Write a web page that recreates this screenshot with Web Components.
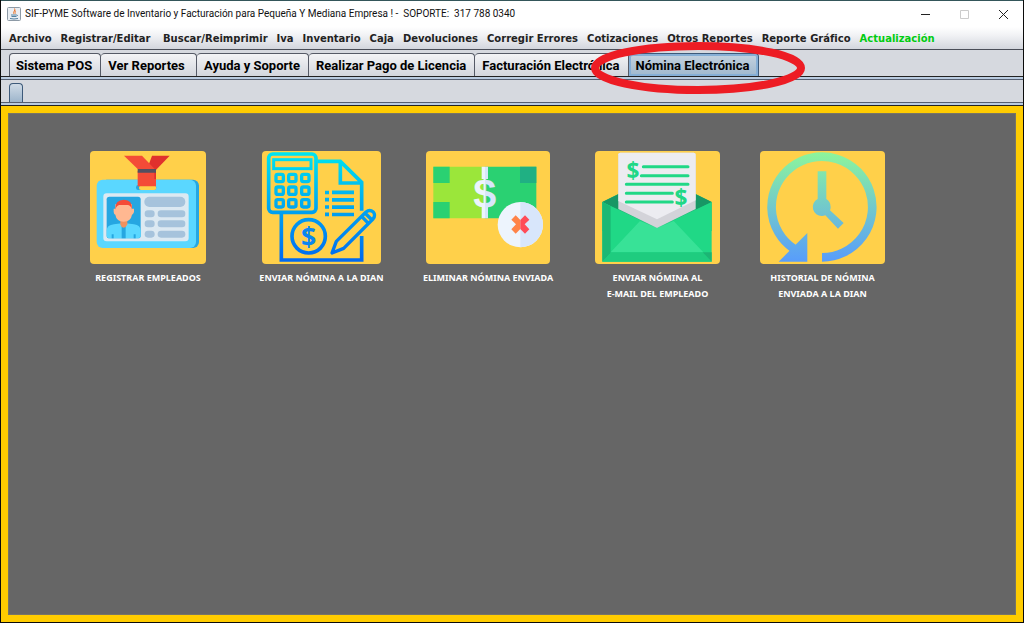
<!DOCTYPE html>
<html lang="es">
<head>
<meta charset="utf-8">
<meta name="viewport" content="width=device-width, initial-scale=1">
<title>SIF-PYME</title>
<style>
  html, body { height: 100%; margin: 0; }
  body { background: #000; }
</style>
</head>
<body>
<sif-window>
  <title-bar slot="title">SIF-PYME Software de Inventario y Facturación para Pequeña Y Mediana Empresa ! -&nbsp; SOPORTE:&nbsp; 317 788 0340</title-bar>
  <menu-bar slot="menu">
    <menu-item>Archivo</menu-item>
    <menu-item>Registrar/Editar&nbsp;</menu-item>
    <menu-item>Buscar/Reimprimir</menu-item>
    <menu-item>Iva</menu-item>
    <menu-item>Inventario</menu-item>
    <menu-item>Caja</menu-item>
    <menu-item>Devoluciones</menu-item>
    <menu-item>Corregir Errores</menu-item>
    <menu-item>Cotizaciones</menu-item>
    <menu-item>Otros Reportes</menu-item>
    <menu-item>Reporte Gráfico</menu-item>
    <menu-item accent>Actualización</menu-item>
  </menu-bar>
  <tab-strip slot="tabs">
    <tab-item>Sistema POS</tab-item>
    <tab-item>Ver Reportes&nbsp;</tab-item>
    <tab-item>Ayuda y Soporte</tab-item>
    <tab-item>Realizar Pago de Licencia</tab-item>
    <tab-item>Facturación Electrónica</tab-item>
    <tab-item selected marked>Nómina Electrónica</tab-item>
  </tab-strip>
  <tab-strip slot="tabs">
    <tab-item compact selected label="Opciones"></tab-item>
  </tab-strip>

  <action-card>
    <svg slot="icon" width="116" height="113" viewBox="28 20 348 339" aria-hidden="true">
      <rect x="60" y="106" width="295" height="205" rx="18" fill="#26a6e1"/>
      <rect x="48" y="106" width="298" height="205" rx="18" fill="#5ad7ff"/>
      <rect x="166" y="122" width="61" height="15" rx="7" fill="#26a6e1"/>
      <rect x="175" y="124" width="52" height="13" rx="6" fill="#ffd04a"/>
      <path d="M214 34H267L225 78H198Z" fill="#e0312d"/>
      <path d="M130 34H184L222 74H171Z" fill="#f44b37"/>
      <path d="M171 80H226V126H171Z" fill="#f44b37"/>
      <path d="M221 80H226V104H221Z" fill="#e0312d"/>
      <path d="M171 74H226V85H171Z" fill="#544f60"/>
      <rect x="68" y="147" width="256" height="144" rx="10" fill="#dce9f2"/>
      <rect x="78" y="157" width="102" height="125" rx="8" fill="#26a6e1"/>
      <path d="M78 276V258Q79 242 100 240L129 236L160 240Q180 243 180 259V276Q178 282 172 282H86Q80 282 78 276Z" fill="#5ad7ff"/>
      <path d="M123 240H135V282H123ZM93 270H99V282H93ZM159 270H165V282H159Z" fill="#26a6e1"/>
      <path d="M119 222H140V240Q137 249 129 250Q121 249 119 240Z" fill="#f0915f"/>
      <path d="M104 193V180H154V193H160V203Q157 211 154 211Q151 231 129 232Q107 231 104 211Q100 211 99 203V193Z" fill="#ffb891"/>
      <path d="M104 196Q102 166 130 166Q156 166 154 196Q151 184 142 182H116Q107 184 104 196Z" fill="#f44b37"/>
      <g fill="#a6c3dc">
        <rect x="191" y="157" width="123" height="31" rx="15"/>
        <rect x="192" y="198" width="30" height="21" rx="10"/><rect x="231" y="198" width="83" height="21" rx="10"/>
        <rect x="192" y="228" width="30" height="21" rx="10"/><rect x="231" y="228" width="83" height="21" rx="10"/>
        <rect x="192" y="259" width="30" height="21" rx="10"/><rect x="231" y="259" width="83" height="21" rx="10"/>
      </g>
    </svg>
    REGISTRAR EMPLEADOS
  </action-card>

  <action-card>
    <svg slot="icon" width="119" height="113" viewBox="36 20 357 339" aria-hidden="true">
      <defs>
        <linearGradient id="dian" gradientUnits="userSpaceOnUse" x1="0" y1="25" x2="0" y2="350">
          <stop offset="0" stop-color="#00e5f0"/><stop offset="1" stop-color="#0068f0"/>
        </linearGradient>
      </defs>
      <g fill="none" stroke="url(#dian)" stroke-width="11">
        <rect x="56" y="29" width="142" height="175" rx="12"/>
        <rect x="71" y="46" width="112" height="27" stroke-width="9"/>
        <path d="M202 51H271L335 114V199M271 51V116H335M94 208V347H335V275"/>
        <g stroke-width="10">
          <rect x="78" y="90" width="22" height="22" rx="5"/><rect x="116" y="90" width="22" height="22" rx="5"/><rect x="155" y="90" width="22" height="22" rx="5"/>
          <rect x="78" y="128" width="22" height="22" rx="5"/><rect x="116" y="128" width="22" height="22" rx="5"/><rect x="155" y="128" width="22" height="22" rx="5"/>
          <rect x="78" y="166" width="22" height="22" rx="5"/><rect x="116" y="166" width="22" height="22" rx="5"/><rect x="155" y="166" width="22" height="22" rx="5"/>
        </g>
        <path d="M225 144.500H237M246 144H312M225 166H237M246 166.500H312M225 188H237M246 188.500H312M225 210H237M246 210.500H312"/>
        <circle cx="176" cy="276" r="50"/>
        <path d="M246 326L259 291L348 203Q359 194 370 203Q378 213 369 224L281 312ZM335 216L355 237M345 206L366 227" stroke-width="10" stroke-linejoin="round"/>
      </g>
      <text x="176" y="305" text-anchor="middle" font-family="Open Sans, sans-serif" font-weight="700" font-size="80" fill="#0a86ef">$</text>
    </svg>
    ENVIAR NÓMINA A LA DIAN
  </action-card>

  <action-card>
    <svg slot="icon" width="124" height="113" viewBox="33 20 372 339" aria-hidden="true">
      <defs>
        <linearGradient id="bill" gradientUnits="userSpaceOnUse" x1="180" y1="0" x2="238" y2="0">
          <stop offset="0.500" stop-color="#edf4fd"/><stop offset="0.500" stop-color="#d8e6fb"/>
        </linearGradient>
      </defs>
      <path d="M55 67H209V222H55Z" fill="#9be63a"/>
      <path d="M209 67H364V222H209Z" fill="#2ad172"/>
      <path d="M55 67H104V116H55ZM55 173H104V222H55Z" fill="#2ad172"/>
      <path d="M315 67H364V116H315Z" fill="#20b083"/>
      <path d="M200 67H219V104H200ZM200 187H219V222H200Z" fill="url(#bill)"/>
      <text x="209" y="190" text-anchor="middle" font-family="Liberation Sans, sans-serif" font-weight="700" font-size="124" fill="url(#bill)">$</text>
      <circle cx="316" cy="241" r="68" fill="#edf4fd"/>
      <path d="M316 173A68 68 0 0 1 316 309Z" fill="#d8e6fb"/>
      <path d="M316 227L302 213L289 226L303 240L289 255L302 268L316 254Z" fill="#ff8348"/>
      <path d="M316 227L330 213L343 226L329 240L343 255L330 268L316 254Z" fill="#ff4b58"/>
    </svg>
    ELIMINAR NÓMINA ENVIADA
  </action-card>

  <action-card>
    <svg slot="icon" width="125" height="113" viewBox="31 20 375 339" aria-hidden="true">
      <path d="M53 173L101 149H333L381 173V260H53Z" fill="#1cb574"/>
      <path d="M53 173L101 150V197Z" fill="#189765"/>
      <path d="M381 173L333 150V197Z" fill="#189765"/>
      <path d="M53 173L217 251L381 173V352H53Z" fill="#20d886"/>
      <path d="M53 173L78 186V326L53 352Z" fill="#1cb875"/>
      <path d="M166 230L217 251L267 230L356 324H78Z" fill="#38e297"/>
      <path d="M53 352L80 324H354L381 352Z" fill="#1fcc7f"/>
      <path d="M354 324H381V352Z" fill="#1cb574"/>
      <path d="M101 30Q101 25 107 25H327Q333 25 333 31V194L217 251L101 194Z" fill="#d3d3d9"/>
      <path d="M101 30Q101 25 107 25H327Q333 25 333 31V168L217 225L101 170Z" fill="#ececf1"/>
      <path d="M176 67H310M170 94H310M125 120H310M125 147H263M125 173H263" stroke="#20d886" stroke-width="9" stroke-linecap="round"/>
      <g fill="#20d886" font-family="Open Sans, sans-serif" font-weight="700" font-size="68" text-anchor="middle">
        <text x="145" y="103">$</text>
        <text x="289" y="184">$</text>
      </g>
    </svg>
    ENVIAR NÓMINA AL<br>E-MAIL DEL EMPLEADO
  </action-card>

  <action-card>
    <svg slot="icon" width="125" height="113" viewBox="31 20 375 339" aria-hidden="true">
      <defs>
        <linearGradient id="clock" gradientUnits="userSpaceOnUse" x1="0" y1="25" x2="0" y2="350">
          <stop offset="0" stop-color="#8cf59b"/><stop offset="1" stop-color="#589dfb"/>
        </linearGradient>
      </defs>
      <path d="M217 339A151 151 0 1 0 132 313" fill="none" stroke="url(#clock)" stroke-width="26"/>
      <path d="M173 266V352H87Z" fill="url(#clock)"/>
      <path d="M204 81H230V164Q243 172 243 188Q243 194 241 198L282 236L265 253L227 213Q222 215 217 215A27 27 0 0 1 204 164Z" fill="url(#clock)"/>
    </svg>
    HISTORIAL DE NÓMINA<br>ENVIADA A LA DIAN
  </action-card>
</sif-window>

<script>
  const define = (name, html, setup) => {
    const template = document.createElement('template');
    template.innerHTML = html;
    customElements.define(name, class extends HTMLElement {
      constructor() {
        super();
        this.attachShadow({ mode: 'open' }).append(template.content.cloneNode(true));
      }
      connectedCallback() { if (setup) setup(this, this.shadowRoot); }
    });
  };

  define('sif-window', `
    <style>
      :host { display: flex; flex-direction: column; min-height: 100vh; box-sizing: border-box;
        border: solid #0b0b0b; border-width: 0 1px 1px; background: #d6d9df; }
      main { flex: 1; box-sizing: border-box; display: grid; align-content: start;
        grid-template-columns: 174fr 173fr 160fr 179fr 151fr;
        padding: 38px 118px 24px 53px; background: #666; border: 7px solid #fc0;
        box-shadow: inset 0 0 0 1px #777466; }
    </style>
    <slot name="title"></slot>
    <slot name="menu"></slot>
    <slot name="tabs"></slot>
    <main><slot></slot></main>`);

  define('title-bar', `
    <style>
      :host { display: flex; align-items: center; height: 26px; padding-left: 6px; background: #fff;
        border-top: 1px solid #34565a; font: 10px/16px Roboto, sans-serif; color: #111; }
      .logo { margin-right: 4px; flex: none; }
      .text { flex: 1; white-space: nowrap; overflow: hidden; }
      button { width: 39px; height: 26px; padding: 0; border: 0; background: none; display: grid; place-items: center; }
      button svg { fill: none; stroke: #222; }
      button:disabled svg { stroke: #ccc; }
    </style>
    <svg class="logo" width="14" height="14" viewBox="0 0 14 14" aria-hidden="true">
      <rect x=".5" y=".5" width="13" height="13" rx="1" fill="#e9eef3" stroke="#8d9aa6"/>
      <path d="M7.500 1.500C9 3.500 5.500 4.500 7 7M9 3.500C7.500 4.500 8 5.500 8.500 6.500" fill="none" stroke="#e8762d"/>
      <path d="M4 8H9.500M4.500 9.500H9M9.500 8Q11.500 8 9.500 9.500M3 11.500Q7 12.500 11 11.500" fill="none" stroke="#5382a1"/>
    </svg>
    <span class="text"><slot></slot></span>
    <button aria-label="Minimizar"><svg width="11" height="11"><path d="M1 5.500H10"/></svg></button>
    <button aria-label="Maximizar" disabled><svg width="11" height="11"><path d="M1.500 1.500H9.500V9.500H1.500Z"/></svg></button>
    <button aria-label="Cerrar"><svg width="11" height="11"><path d="M1 1L10 10M10 1L1 10"/></svg></button>`);

  define('menu-bar', `
    <style>
      :host { display: block; background: linear-gradient(#fff, #f0f1f4 40%, #d3d6dd); border-bottom: 1px solid #4a4e58; }
      nav { display: flex; gap: 9px; height: 22px; padding-left: 8px; align-items: flex-end; }
    </style>
    <nav><slot></slot></nav>`);

  define('menu-item', `
    <style>
      :host { display: block; color: #222; }
      :host([accent]) { color: #0c1; }
      button { display: block; border: 0; padding: 0; background: none; color: inherit; white-space: nowrap;
        font: 700 10px/20px "DejaVu Sans", Verdana, sans-serif; }
    </style>
    <button><slot></slot></button>`);

  define('tab-strip', `
    <style>
      :host { display: block; border-bottom: 1px solid #555e70; background: #b9cbe0; }
      .row { display: flex; align-items: flex-end; height: 26px; padding-left: 8px;
        background: #d6d9df; border-bottom: 1px solid #222; margin-bottom: 2px; }
      :host(:last-of-type) { border-bottom-color: #222; }
      :host(:last-of-type) .row { height: 22px; border-bottom-color: #555e70; }
    </style>
    <div class="row" role="tablist"><slot></slot></div>`);

  define('tab-item', `
    <style>
      :host { display: block; position: relative; }
      button { display: block; box-sizing: border-box; height: 23px; margin: 0; padding: 1px 8px 0 7px;
        border: solid #555a66; border-width: 1px 1px 0 0; border-radius: 4px 4px 0 0;
        background: linear-gradient(#f3f4f6, #d3d6dd); color: #000; white-space: nowrap;
        font: 700 13px/21px Roboto, Arial, sans-serif; }
      :host(:first-child) button { border-left-width: 1px; padding-left: 6px; }
      :host([selected]) button { border-color: #3d5a7a; background: linear-gradient(#c5d3e0, #a0b8cd);
        box-shadow: inset 0 0 0 2px #86afd6; }
      :host([compact]) button { width: 14px; height: 19px; padding: 0; box-shadow: none;
        background: linear-gradient(#d0dbe6, #9db5cb); }
      svg { display: none; }
      :host([marked]) svg { display: block; position: absolute; left: -38px; top: -11px; z-index: 1; pointer-events: none; }
    </style>
    <button role="tab"><slot></slot></button>
    <svg width="214" height="52" viewBox="0 0 214 52" aria-hidden="true">
      <ellipse cx="107" cy="26" rx="103" ry="22" fill="none" stroke="#ed1c24" stroke-width="8"/>
    </svg>`,
    (host, root) => {
      const button = root.querySelector('button');
      button.setAttribute('aria-selected', host.hasAttribute('selected'));
      if (host.hasAttribute('label')) button.setAttribute('aria-label', host.getAttribute('label'));
    });

  define('action-card', `
    <style>
      :host { display: flex; justify-content: center; }
      button { display: flex; flex-direction: column; align-items: center; gap: 6px; padding: 0; border: 0;
        background: none; color: #fff; white-space: nowrap; text-align: center;
        font: 700 9px/16px "Noto Sans", Verdana, sans-serif; }
      .tile { display: flex; background: #ffd04a; border-radius: 4px; overflow: hidden; }
    </style>
    <button><span class="tile"><slot name="icon"></slot></span><span><slot></slot></span></button>`);
</script>
</body>
</html>
